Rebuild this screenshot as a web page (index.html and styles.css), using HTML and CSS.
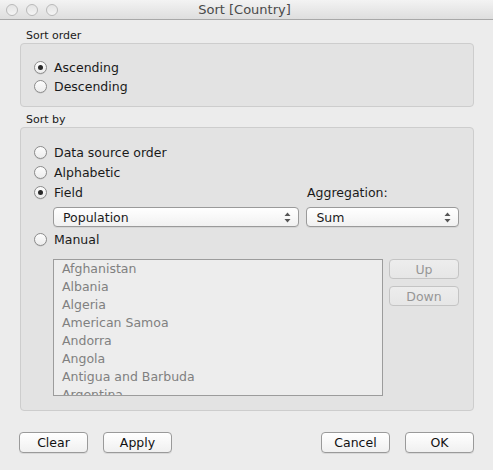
FILE: index.html
```html
<!DOCTYPE html>
<html>
<head>
<meta charset="utf-8">
<link rel="stylesheet" href="styles.css">
</head>
<body>
<div class="window">
  <div class="titlebar">
    <div class="lights">
      <span class="light"></span><span class="light"></span><span class="light"></span>
    </div>
    <div class="title">Sort [Country]</div>
  </div>
  <div class="content">
    <div class="label label-first">Sort order</div>
    <div class="group group-order">
      <div class="row"><span class="radio checked"></span><span>Ascending</span></div>
      <div class="row"><span class="radio"></span><span>Descending</span></div>
    </div>
    <div class="label label-second">Sort by</div>
    <div class="group group-by">
      <div class="row"><span class="radio"></span><span>Data source order</span></div>
      <div class="row"><span class="radio"></span><span>Alphabetic</span></div>
      <div class="row row-field">
        <div class="field-left"><span class="radio checked"></span><span>Field</span></div>
        <span class="agg-label">Aggregation:</span>
      </div>
      <div class="select-row">
        <div class="select select-wide"><span>Population</span><svg class="arrows" width="7" height="11" viewBox="0 0 7 11"><path d="M3.5 0.5 L6.5 4 L0.5 4 Z M3.5 10.5 L6.5 7 L0.5 7 Z" fill="#555"/></svg></div>
        <div class="select select-narrow"><span>Sum</span><svg class="arrows" width="7" height="11" viewBox="0 0 7 11"><path d="M3.5 0.5 L6.5 4 L0.5 4 Z M3.5 10.5 L6.5 7 L0.5 7 Z" fill="#555"/></svg></div>
      </div>
      <div class="row row-manual"><span class="radio"></span><span>Manual</span></div>
      <div class="list-row">
        <div class="list">
          <div class="item">Afghanistan</div>
          <div class="item">Albania</div>
          <div class="item">Algeria</div>
          <div class="item">American Samoa</div>
          <div class="item">Andorra</div>
          <div class="item">Angola</div>
          <div class="item">Antigua and Barbuda</div>
          <div class="item">Argentina</div>
        </div>
        <div class="side-buttons">
          <div class="btn btn-disabled">Up</div>
          <div class="btn btn-disabled">Down</div>
        </div>
      </div>
    </div>
    <div class="footer">
      <div class="footer-left">
        <div class="btn btn-main">Clear</div>
        <div class="btn btn-main">Apply</div>
      </div>
      <div class="footer-right">
        <div class="btn btn-main">Cancel</div>
        <div class="btn btn-main">OK</div>
      </div>
    </div>
  </div>
</div>
</body>
</html>
```
FILE: styles.css
```css
* { box-sizing: border-box; }
html, body { margin: 0; padding: 0; }
body {
  background: #ececec;
  font-family: "DejaVu Sans", "Liberation Sans", sans-serif;
  font-size: 12.5px;
  color: #1a1a1a;
}
.window {
  width: 493px;
  height: 470px;
  background: #ececec;
  overflow: hidden;
}
.titlebar {
  height: 20px;
  background: linear-gradient(#f3f3f3, #dedede);
  border-bottom: 1px solid #a8a8a8;
  display: flex;
  align-items: center;
  position: relative;
}
.lights {
  display: flex;
  gap: 8px;
  padding-left: 6px;
}
.light {
  width: 12px;
  height: 12px;
  border-radius: 50%;
  border: 1px solid #b9b9b9;
  background: linear-gradient(#e4e4e4, #f4f4f4);
}
.title {
  flex: 1;
  text-align: center;
  font-size: 13px;
  color: #4a4a4a;
  margin-right: 62px;
  line-height: 19px;
}
.content {
  padding: 9px 19px 0 20px;
}
.label {
  font-size: 11px;
  line-height: 14px;
  padding-left: 6px;
  color: #1a1a1a;
}
.label-second {
  margin-top: 5px;
  line-height: 15px;
}
.group {
  background: #e3e3e3;
  border: 1px solid #cdcdcd;
  border-radius: 4px;
  padding-left: 13px;
  padding-right: 14px;
}
.group-order {
  height: 64px;
  padding-top: 14px;
}
.group-order .row { height: 19px; }
.group-by {
  height: 284px;
  padding-top: 14px;
}
.row {
  display: flex;
  align-items: center;
  height: 20px;
  gap: 7px;
}
.radio {
  width: 13px;
  height: 13px;
  border-radius: 50%;
  border: 1px solid #8c8c8c;
  background: linear-gradient(#fdfdfd, #ececec);
  box-shadow: 0 0.5px 0.5px rgba(0,0,0,0.15);
  display: flex;
  align-items: center;
  justify-content: center;
  flex: none;
}
.radio.checked::after {
  content: "";
  width: 5px;
  height: 5px;
  border-radius: 50%;
  background: #2a2a2a;
}
.row-field {
  height: 21px;
  gap: 0;
}
.field-left {
  display: flex;
  align-items: center;
  gap: 7px;
  width: 273px;
}
.agg-label { color: #1a1a1a; }
.select-row {
  display: flex;
  gap: 7px;
  padding-left: 19px;
  margin-top: 4px;
}
.select {
  height: 20px;
  border: 1px solid #9a9a9a;
  border-radius: 4px;
  background: linear-gradient(#ffffff, #f1f1f1);
  display: flex;
  align-items: center;
  justify-content: space-between;
  padding: 0 7px 0 9px;
  box-shadow: 0 1px 0 rgba(0,0,0,0.06);
}
.select-wide { width: 247px; }
.select-narrow { width: 153px; }
.arrows { display: block; }
.row-manual { margin-top: 2px; }
.list-row {
  display: flex;
  gap: 6px;
  padding-left: 19px;
  margin-top: 10px;
}
.list {
  width: 331px;
  height: 137px;
  border: 1px solid #9c9c9c;
  background: #ededed;
  overflow: hidden;
  padding-left: 8px;
  color: #808080;
}
.item {
  height: 18px;
  line-height: 18px;
}
.side-buttons {
  display: flex;
  flex-direction: column;
  gap: 7px;
}
.btn {
  display: flex;
  align-items: center;
  justify-content: center;
  border-radius: 4px;
  height: 20px;
}
.btn-disabled {
  width: 70px;
  border: 1px solid #c4c4c4;
  background: linear-gradient(#ededed, #e6e6e6);
  color: #969696;
}
.footer {
  display: flex;
  justify-content: space-between;
  margin-top: 21px;
  margin-left: -1px;
}
.footer-left, .footer-right {
  display: flex;
  gap: 15px;
}
.btn-main {
  width: 69px;
  height: 21px;
  border: 1px solid #9a9a9a;
  background: linear-gradient(#ffffff, #f0f0f0);
  box-shadow: 0 1px 0 rgba(0,0,0,0.08);
  color: #111;
}
```
